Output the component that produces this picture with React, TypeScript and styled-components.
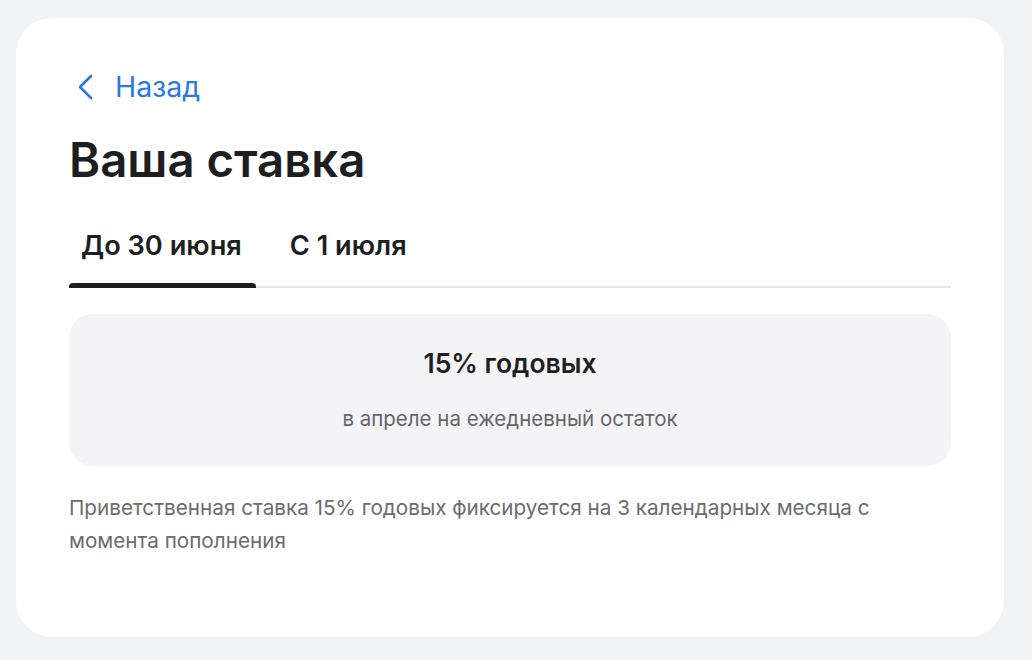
import styled, { createGlobalStyle } from 'styled-components';

const GlobalStyle = createGlobalStyle`
  html, body {
    margin: 0;
    padding: 0;
    background: #f2f3f5;
  }
  body {
    font-family: Inter, 'Noto Sans', sans-serif;
  }
`;

const Page = styled.div`
  padding: 18px 28px 23px 16px;
`;

const Card = styled.div`
  background: #ffffff;
  border-radius: 36px;
  padding: 51px 53px 80px 53px;
`;

const BackLink = styled.a`
  display: flex;
  align-items: center;
  gap: 22px;
  color: #2a78e4;
  font-size: 28.5px;
  line-height: 36px;
  text-decoration: none;
  cursor: pointer;
  padding-left: 8px;
`;

const Title = styled.h1`
  margin: 27px 0 0 0;
  font-size: 47.3px;
  line-height: 56px;
  font-weight: 600;
  color: #1d1e22;
`;

const Tabs = styled.div`
  display: flex;
  margin-top: 30px;
  border-bottom: 2px solid #e6e6e9;
`;

const Tab = styled.div<{ active?: boolean }>`
  position: relative;
  padding: 10px 14px 22px 12px;
  font-size: 27.2px;
  line-height: 36px;
  font-weight: 600;
  color: #1d1e22;
  margin-right: 22px;
  &::after {
    content: '';
    display: ${({ active }) => (active ? 'block' : 'none')};
    position: absolute;
    left: 0;
    right: 0;
    bottom: -2px;
    height: 5px;
    border-radius: 4px 4px 0 0;
    background: #1d1e22;
  }
`;

const RateBox = styled.div`
  margin-top: 26px;
  background: #f4f4f6;
  border-radius: 24px;
  padding: 33px 20px;
  display: flex;
  flex-direction: column;
  align-items: center;
`;

const Rate = styled.div`
  font-size: 26.5px;
  line-height: 32px;
  font-weight: 600;
  color: #1d1e22;
`;

const RateNote = styled.div`
  margin-top: 26px;
  font-size: 20.5px;
  line-height: 28px;
  color: #66666b;
`;

const Footnote = styled.p`
  margin: 25px 0 0 0;
  font-size: 20.7px;
  line-height: 33px;
  color: #6b6b70;
  max-width: 830px;
`;

export default function App() {
  return (
    <>
      <GlobalStyle />
      <Page>
        <Card>
          <BackLink>
            <svg width="16" height="26" viewBox="0 0 16 26" fill="none">
              <path d="M14 2 L3 13 L14 24" stroke="#2a78e4" strokeWidth="2.6" strokeLinecap="round" strokeLinejoin="round" />
            </svg>
            Назад
          </BackLink>
          <Title>Ваша ставка</Title>
          <Tabs>
            <Tab active>До 30 июня</Tab>
            <Tab>С 1 июля</Tab>
          </Tabs>
          <RateBox>
            <Rate>15% годовых</Rate>
            <RateNote>в апреле на ежедневный остаток</RateNote>
          </RateBox>
          <Footnote>
            Приветственная ставка 15% годовых фиксируется на 3 календарных месяца с
            момента пополнения
          </Footnote>
        </Card>
      </Page>
    </>
  );
}
